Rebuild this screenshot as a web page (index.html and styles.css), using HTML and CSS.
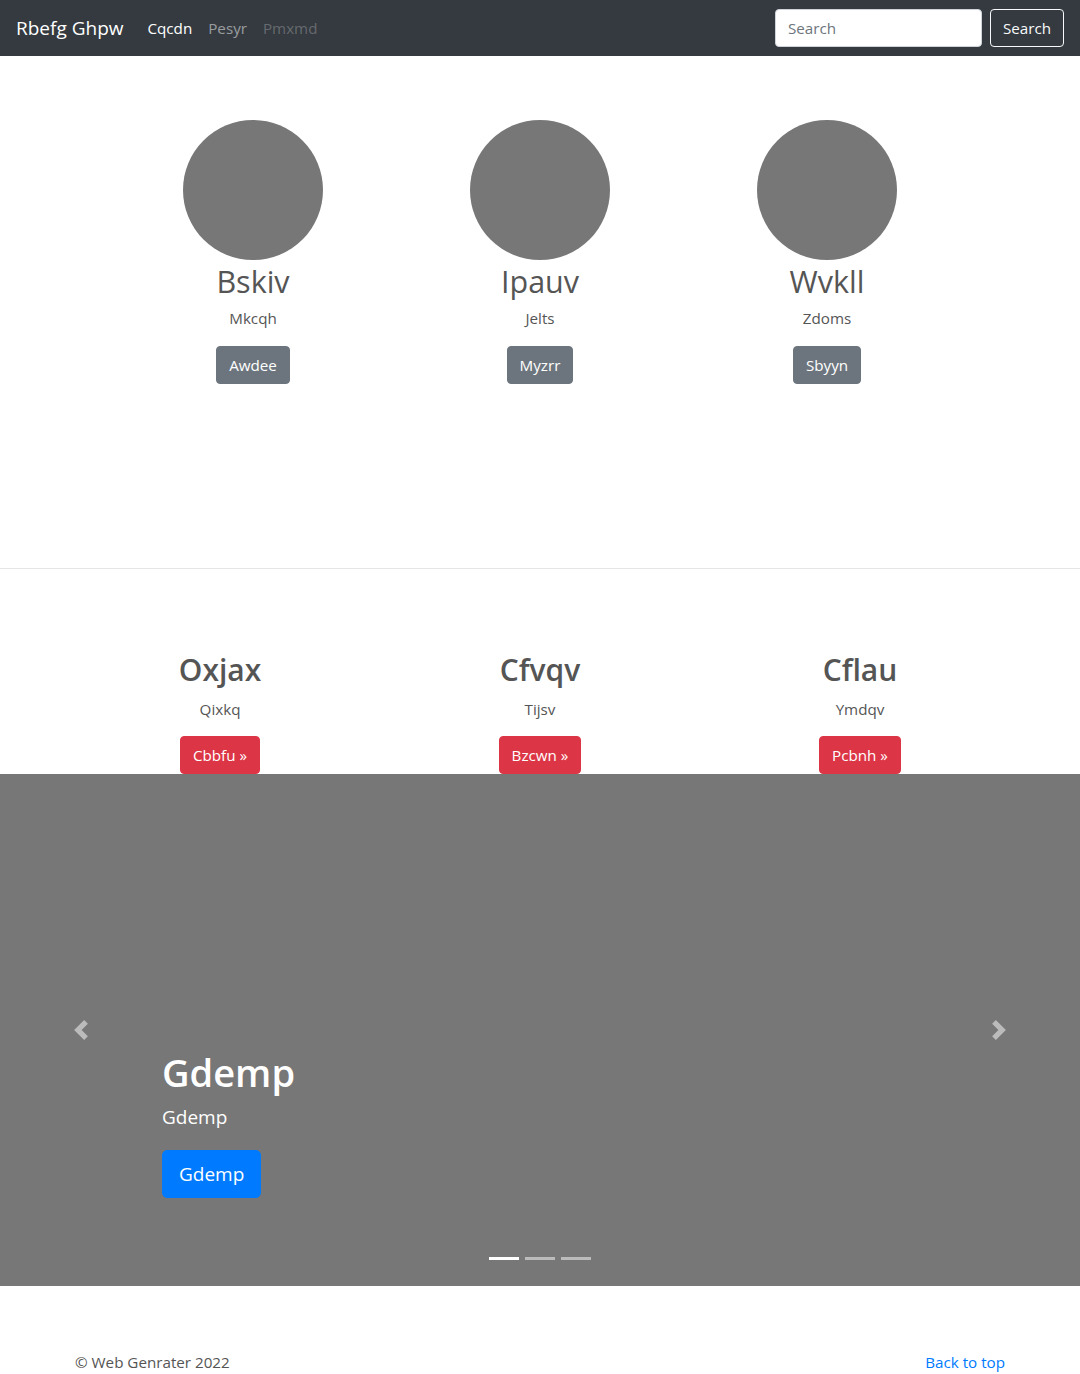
FILE: index.html
```html
<!DOCTYPE html>
<html lang="en">
<head>
<meta charset="utf-8">
<title>Rbefg Ghpw</title>
<link rel="stylesheet" href="styles.css">
</head>
<body>
<nav class="navbar">
  <a class="brand" href="#">Rbefg Ghpw</a>
  <ul class="nav">
    <li><a class="nav-link active" href="#">Cqcdn</a></li>
    <li><a class="nav-link" href="#">Pesyr</a></li>
    <li><a class="nav-link disabled" href="#">Pmxmd</a></li>
  </ul>
  <form class="search">
    <input class="search-input" type="text" placeholder="Search">
    <button class="btn btn-outline-light" type="button">Search</button>
  </form>
</nav>

<section class="team">
  <div class="team-row">
    <div class="member">
      <div class="avatar"></div>
      <h2 class="member-name">Bskiv</h2>
      <p class="member-role">Mkcqh</p>
      <a class="btn btn-secondary" href="#">Awdee</a>
    </div>
    <div class="member">
      <div class="avatar"></div>
      <h2 class="member-name">Ipauv</h2>
      <p class="member-role">Jelts</p>
      <a class="btn btn-secondary" href="#">Myzrr</a>
    </div>
    <div class="member">
      <div class="avatar"></div>
      <h2 class="member-name">Wvkll</h2>
      <p class="member-role">Zdoms</p>
      <a class="btn btn-secondary" href="#">Sbyyn</a>
    </div>
  </div>
</section>

<hr class="divider">

<section class="features">
  <div class="feature">
    <h2 class="feature-title">Oxjax</h2>
    <p class="feature-text">Qixkq</p>
    <a class="btn btn-danger" href="#">Cbbfu &raquo;</a>
  </div>
  <div class="feature">
    <h2 class="feature-title">Cfvqv</h2>
    <p class="feature-text">Tijsv</p>
    <a class="btn btn-danger" href="#">Bzcwn &raquo;</a>
  </div>
  <div class="feature">
    <h2 class="feature-title">Cflau</h2>
    <p class="feature-text">Ymdqv</p>
    <a class="btn btn-danger" href="#">Pcbnh &raquo;</a>
  </div>
</section>

<div class="carousel">
  <div class="slide">
    <div class="caption">
      <h1 class="caption-title">Gdemp</h1>
      <p class="caption-text">Gdemp</p>
      <a class="btn btn-primary btn-lg" href="#">Gdemp</a>
    </div>
  </div>
  <ol class="indicators">
    <li class="active"></li>
    <li></li>
    <li></li>
  </ol>
  <a class="control control-prev" href="#" aria-label="Previous">
    <svg width="20" height="20" viewBox="0 0 8 8" fill="#fff"><path d="M5.25 0l-4 4 4 4 1.5-1.5L4.25 4l2.5-2.5L5.25 0z"/></svg>
  </a>
  <a class="control control-next" href="#" aria-label="Next">
    <svg width="20" height="20" viewBox="0 0 8 8" fill="#fff"><path d="M2.75 0l-1.5 1.5L3.75 4l-2.5 2.5L2.75 8l4-4-4-4z"/></svg>
  </a>
</div>

<footer class="footer">
  <p class="copyright">&copy; Web Genrater 2022</p>
  <a class="back-top" href="#">Back to top</a>
</footer>
</body>
</html>
```

FILE: styles.css
```css
* { box-sizing: border-box; }

body {
  margin: 0;
  font-family: "Open Sans", "Noto Sans", Arial, sans-serif;
  font-size: 15.2px;
  line-height: 24px;
  color: #212529;
  background: #fff;
}

a { text-decoration: none; }

.navbar {
  display: flex;
  align-items: center;
  height: 56px;
  padding: 8px 16px;
  background: #343a40;
}

.brand {
  color: #fff;
  font-size: 19px;
  line-height: 30px;
  margin-right: 16px;
  padding: 5px 0;
}

.nav {
  display: flex;
  list-style: none;
  margin: 0;
  padding: 0;
  flex: 1;
}

.nav-link {
  display: block;
  padding: 8px 8px;
  color: rgba(255,255,255,.5);
}
.nav-link.active { color: #fff; }
.nav-link.disabled { color: rgba(255,255,255,.25); }

.search {
  display: flex;
  align-items: center;
  gap: 8px;
}

.search-input {
  width: 207px;
  height: 38px;
  padding: 6px 12px;
  font: inherit;
  color: #495057;
  background: #fff;
  border: 1px solid #ced4da;
  border-radius: 4px;
}
.search-input::placeholder { color: #6c757d; }

.btn {
  display: inline-block;
  font: inherit;
  line-height: 24px;
  padding: 6px 12px;
  border: 1px solid transparent;
  border-radius: 4px;
  color: #fff;
  cursor: pointer;
}

.btn-outline-light {
  background: transparent;
  color: #f8f9fa;
  border-color: #f8f9fa;
}
.btn-secondary { background: #6c757d; border-color: #6c757d; }
.btn-danger { background: #dc3545; border-color: #dc3545; }
.btn-primary { background: #007bff; border-color: #007bff; }
.btn-lg {
  font-size: 19px;
  line-height: 30px;
  padding: 8px 16px;
  border-radius: 5px;
}

.team {
  padding: 64px 0 184px;
}

.team-row {
  display: grid;
  grid-template-columns: repeat(3, 1fr);
  width: 861px;
  margin: 0 auto;
}

.member {
  display: flex;
  flex-direction: column;
  align-items: center;
  text-align: center;
}

.avatar {
  width: 140px;
  height: 140px;
  border-radius: 50%;
  background: #777;
}

.member-name {
  margin: 2px 0 6px;
  font-size: 30.5px;
  line-height: 38px;
  font-weight: 400;
  color: #555;
}

.member-role {
  margin: 0 0 16px;
  color: #555;
}

.divider {
  margin: 0;
  border: 0;
  border-top: 1px solid rgba(0,0,0,.1);
}

.features {
  display: grid;
  grid-template-columns: repeat(3, 1fr);
  width: 960px;
  margin: 0 auto;
  padding-top: 82px;
}

.feature {
  display: flex;
  flex-direction: column;
  align-items: center;
  text-align: center;
}

.feature-title {
  margin: 0 0 8px;
  font-size: 30px;
  line-height: 38px;
  font-weight: 600;
  color: #555;
}

.feature-text {
  margin: 0 0 15px;
  color: #555;
}

.carousel {
  position: relative;
  height: 512px;
  background: #777;
  overflow: hidden;
}

.slide {
  height: 100%;
  display: flex;
  align-items: flex-end;
  padding: 0 162px 88px;
}

.caption {
  color: #fff;
}

.caption-title {
  margin: 0 0 6px;
  font-size: 38px;
  line-height: 48px;
  font-weight: 600;
}

.caption-text {
  margin: 0 0 18px;
  font-size: 19px;
  line-height: 30px;
}

.indicators {
  position: absolute;
  left: 0;
  right: 0;
  bottom: 0;
  display: flex;
  justify-content: center;
  gap: 6px;
  list-style: none;
  margin: 0 0 16px;
  padding: 0;
}

.indicators li {
  width: 30px;
  height: 23px;
  border-top: 10px solid transparent;
  border-bottom: 10px solid transparent;
  background: #fff;
  background-clip: padding-box;
  opacity: .5;
}
.indicators li.active { opacity: 1; }

.control {
  position: absolute;
  top: 0;
  bottom: 0;
  width: 15%;
  display: flex;
  align-items: center;
  justify-content: center;
  opacity: .5;
}
.control-prev { left: 0; }
.control-next { right: 0; }
.control svg { display: block; }

.footer {
  display: flex;
  justify-content: space-between;
  width: 930px;
  margin: 0 auto;
  padding: 64px 0 0;
  color: #555;
}

.copyright { margin: 0 0 16px; }

.back-top { color: #007bff; }
```
